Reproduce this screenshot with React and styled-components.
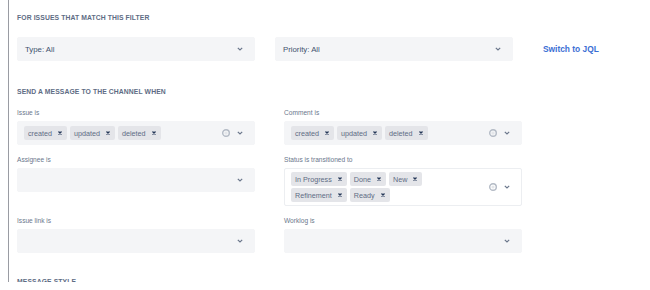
import React from "react";
import styled, { createGlobalStyle } from "styled-components";

const GlobalStyle = createGlobalStyle`
  body {
    margin: 0;
    background: #ffffff;
    font-family: "Liberation Sans", Arial, sans-serif;
  }
`;

const Frame = styled.div`
  height: 282px;
  overflow: hidden;
`;

const Panel = styled.div`
  margin-left: 8px;
  border-left: 1.5px solid #9a9ca3;
  padding: 13px 0 20px 8px;
`;

const Heading = styled.div`
  font-size: 6.8px;
  line-height: 10px;
  font-weight: 700;
  color: #5e6c84;
  text-transform: uppercase;
  letter-spacing: 0.1px;
  margin-bottom: ${(p) => p.$gap || 0}px;
`;

const FilterRow = styled.div`
  display: flex;
  align-items: center;
  gap: 20px;
  margin-bottom: 26px;
`;

const LinkButton = styled.a`
  font-size: 8.4px;
  font-weight: 700;
  color: #3b6fd4;
  margin-left: 10px;
  cursor: pointer;
`;

const Grid = styled.div`
  display: grid;
  grid-template-columns: 238px 238px;
  column-gap: 29px;
  row-gap: 10px;
  align-items: start;
  margin-top: 11px;
  margin-bottom: 24px;
`;

const Field = styled.div`
  display: flex;
  flex-direction: column;
`;

const Label = styled.div`
  font-size: 6.6px;
  line-height: 10px;
  color: #6b778c;
  margin-bottom: 3px;
`;

const Select = styled.div`
  box-sizing: border-box;
  width: 238px;
  min-height: ${(p) => (p.$tall ? 38 : 24)}px;
  background: ${(p) => (p.$active ? "#ffffff" : "#f4f5f7")};
  border: 1px solid ${(p) => (p.$active ? "#eceef1" : "#f4f5f7")};
  border-radius: 2px;
  display: flex;
  align-items: center;
  padding: 0 11px 0 6px;
`;

const Value = styled.div`
  flex: 1;
  font-size: 7.8px;
  color: #42526e;
  padding-left: 1px;
`;

const Tags = styled.div`
  flex: 1;
`;

const TagWrap = styled.div`
  display: flex;
  flex-wrap: wrap;
  gap: 2px 3px;
  max-width: ${(p) => p.$max || 238}px;
`;

const Tag = styled.span`
  display: inline-flex;
  align-items: center;
  gap: 6px;
  height: 14px;
  padding: 0 5px 0 4px;
  background: #e4e5e9;
  border-radius: 2px;
  font-size: 7.2px;
  color: #5e6c84;
`;

const Indicators = styled.div`
  display: flex;
  align-items: center;
  gap: 7px;
`;

const Cross = () => (
  <svg width="4" height="4" viewBox="0 0 4 4">
    <path d="M0.5 0.5 L3.5 3.5 M3.5 0.5 L0.5 3.5" stroke="#253858" strokeWidth="1.3" />
  </svg>
);

const Clear = () => (
  <svg width="8" height="8" viewBox="0 0 8 8">
    <circle cx="4" cy="4" r="3.3" fill="none" stroke="#b3bac5" strokeWidth="1.4" />
    <circle cx="4" cy="4" r="1.6" fill="#e4e6ea" />
  </svg>
);

const Chevron = () => (
  <svg width="6" height="4" viewBox="0 0 6 4">
    <path d="M0.8 0.9 L3 3 L5.2 0.9" fill="none" stroke="#6b778c" strokeWidth="1.2" />
  </svg>
);

const MultiSelect = ({ tags, tall, max }) => (
  <Select $tall={tall} $active={tall}>
    <Tags>
      <TagWrap $max={max}>
        {tags.map((t) => (
          <Tag key={t}>
            {t}
            <Cross />
          </Tag>
        ))}
      </TagWrap>
    </Tags>
    <Indicators>
      <Clear />
      <Chevron />
    </Indicators>
  </Select>
);

const SingleSelect = ({ value }) => (
  <Select>
    <Value>{value}</Value>
    <Chevron />
  </Select>
);

const events = ["created", "updated", "deleted"];

export default function App() {
  return (
    <Frame>
      <GlobalStyle />
      <Panel>
        <Heading $gap={14}>For issues that match this filter</Heading>
        <FilterRow>
          <SingleSelect value="Type: All" />
          <SingleSelect value="Priority: All" />
          <LinkButton>Switch to JQL</LinkButton>
        </FilterRow>

        <Heading>Send a message to the channel when</Heading>
        <Grid>
          <Field>
            <Label>Issue is</Label>
            <MultiSelect tags={events} />
          </Field>
          <Field>
            <Label>Comment is</Label>
            <MultiSelect tags={events} />
          </Field>
          <Field>
            <Label>Assignee is</Label>
            <SingleSelect value="" />
          </Field>
          <Field>
            <Label>Status is transitioned to</Label>
            <MultiSelect
              tall
              max={140}
              tags={["In Progress", "Done", "New", "Refinement", "Ready"]}
            />
          </Field>
          <Field>
            <Label>Issue link is</Label>
            <SingleSelect value="" />
          </Field>
          <Field>
            <Label>Worklog is</Label>
            <SingleSelect value="" />
          </Field>
        </Grid>

        <Heading>Message style</Heading>
      </Panel>
    </Frame>
  );
}
